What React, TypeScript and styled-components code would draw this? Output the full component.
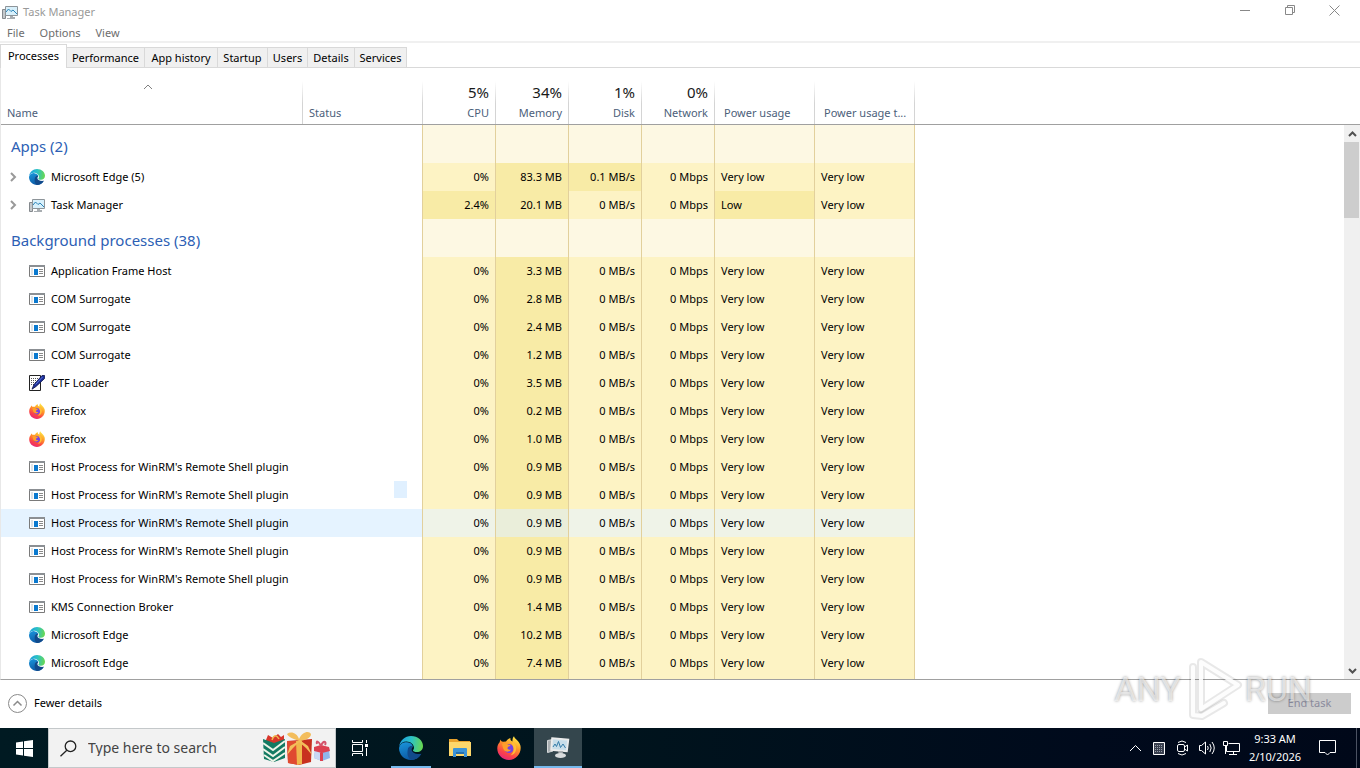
import React from 'react';
import styled, { createGlobalStyle, css } from 'styled-components';

const GlobalStyle = createGlobalStyle`
  *, *::before, *::after { box-sizing: border-box; }
  body {
    margin: 0;
    background: #fff;
    color: #000;
    font: 11px/16px "Noto Sans", "Open Sans", sans-serif;
  }
  button, input { font: inherit; color: inherit; }
  button { padding: 0; border: 0; background: none; }
  svg { display: block; flex: none; }
`;

/* ---------- window shell ---------- */

const Desktop = styled.div`
  display: flex;
  flex-direction: column;
  height: 100vh;
  overflow: hidden;
`;

const Window = styled.main`
  position: relative;
  flex: 1;
  min-height: 0;
  display: flex;
  flex-direction: column;
  background: #fff;
`;

const TitleBar = styled.header`
  display: flex;
  align-items: center;
  height: 24px;
  padding-left: 2px;
  gap: 5px;
  color: #999;
`;

const Title = styled.h1`
  flex: 1;
  margin: 0;
  font-size: 11px;
  font-weight: 400;
`;

const CaptionButton = styled.button`
  display: flex;
  align-items: center;
  justify-content: center;
  width: 45px;
  height: 20px;
  margin-bottom: 4px;
  color: #888;
`;

const CaptionButtons = styled.div`
  display: flex;
  padding-right: 3px;
`;

const MenuBar = styled.nav`
  display: flex;
  height: 19px;
  padding-left: 7px;
  gap: 15px;
  border-bottom: 2px solid #f0f0f0;
  color: #6d6d6d;
`;

const MenuButton = styled.button`
  height: 17px;
  line-height: 17px;
`;

const Tabs = styled.div`
  display: flex;
  align-items: flex-end;
  height: 25px;
  border-bottom: 1px solid #d9d9d9;
`;

const Tab = styled.button<{ $width: number; $active?: boolean }>`
  width: ${p => p.$width}px;
  height: 20px;
  border: 1px solid #d9d9d9;
  border-left-width: 0;
  border-bottom: 0;
  background: #f0f0f0;
  white-space: nowrap;
  ${p =>
    p.$active &&
    css`
      height: 24px;
      margin-bottom: -1px;
      padding-bottom: 2px;
      border-left-width: 1px;
      background: #fff;
    `}
`;

/* ---------- process list ---------- */

const Content = styled.section`
  flex: 1;
  min-height: 0;
  display: flex;
  border-left: 1px solid #e8e8e8;
  border-bottom: 1px solid #a0a0a0;
`;

const TableArea = styled.div`
  flex: 1;
  min-width: 0;
  overflow: hidden;
`;

const Table = styled.table`
  width: 100%;
  table-layout: fixed;
  border-collapse: separate;
  border-spacing: 0;
`;

const HeadCell = styled.th<{ $line?: boolean }>`
  height: 57px;
  padding: 0;
  border-bottom: 1px solid #a0a0a0;
  background: ${p =>
    p.$line ? 'linear-gradient(#fff, #d4d4d4 40%) right 0 top 13px / 1px 100% no-repeat' : 'none'};
  color: #4c607a;
  font-weight: 400;
`;

const HeadInner = styled.div<{ $align?: string; $inset?: number }>`
  display: flex;
  flex-direction: column;
  justify-content: flex-end;
  height: 56px;
  padding: 0 7px 3px ${p => p.$inset ?? 6}px;
  text-align: ${p => p.$align ?? 'left'};
  white-space: nowrap;
`;

const SortMark = styled.span`
  display: flex;
  justify-content: center;
  height: 21px;
  padding-right: 8px;
`;

const Total = styled.span`
  color: #1a1a1a;
  font-size: 15px;
  line-height: 20px;
  margin-bottom: 3px;
`;

const shade = {
  group: '#fdf8e3',
  low: '#fdf3c4',
  high: '#f8eba6',
  hoverLow: '#eff3e8',
  hoverHigh: '#eaeeda',
};

const HeatCell = styled.td<{ $bg: string; $right?: boolean }>`
  padding: 0 6px;
  border-right: 1px solid #e2d09c;
  background: ${p => p.$bg};
  text-align: ${p => (p.$right ? 'right' : 'left')};
  white-space: nowrap;
`;

const StatusCell = styled.td`
  position: relative;
  padding: 0;
  border-right: 1px solid #e2d09c;
`;

const Row = styled.tr<{ $hover?: boolean }>`
  height: 28px;
  & > th, & > ${StatusCell} { background: ${p => (p.$hover ? '#e5f3ff' : 'none')}; }
`;

const NameCell = styled.th`
  padding: 0;
  font-weight: 400;
  text-align: left;
`;

const NameInner = styled.div`
  display: flex;
  align-items: center;
  height: 28px;
  padding-left: 8px;
  white-space: nowrap;
`;

const ExpandSlot = styled.span`
  display: flex;
  flex: none;
  align-items: center;
  width: 20px;
`;

const ProcessName = styled.span`
  margin-left: 6px;
`;

const GroupRow = styled.tr`
  height: 38px;
`;

const GroupName = styled.th`
  padding: 3px 10px 0;
  border-right: 1px solid #e2d09c;
  color: #2d5fb5;
  font-size: 15px;
  font-weight: 400;
  line-height: 20px;
  text-align: left;
`;

const DragBox = styled.span`
  position: absolute;
  top: 0;
  right: 15px;
  width: 13px;
  height: 17px;
  background: #e0f0ff;
`;

const ScrollColumn = styled.div`
  display: flex;
  flex-direction: column;
  width: 16px;
`;

const ScrollHead = styled.div`
  height: 57px;
  border-bottom: 1px solid #a0a0a0;
`;

const ScrollBar = styled.div`
  flex: 1;
  display: flex;
  flex-direction: column;
  justify-content: space-between;
  background: #f0f0f0;
`;

const ScrollButton = styled.button`
  display: flex;
  align-items: center;
  justify-content: center;
  height: 17px;
`;

const ScrollThumb = styled.div`
  height: 76px;
  margin: 0 1px auto 0;
  background: #cdcdcd;
`;

const Footer = styled.footer`
  display: flex;
  align-items: center;
  justify-content: space-between;
  height: 48px;
  padding: 0 9px 2px 8px;
`;

const DetailsButton = styled.button`
  display: flex;
  align-items: center;
  gap: 7px;
`;

const EndTask = styled.button`
  width: 83px;
  height: 21px;
  background: #ccc;
  color: #8a8a9c;
`;

const Watermark = styled.div`
  position: absolute;
  right: 48px;
  bottom: 7px;
  display: flex;
  align-items: center;
  gap: 2px;
  color: rgba(255, 255, 255, 0.6);
  font: 400 34px/64px Roboto, "Liberation Sans", sans-serif;
  text-shadow: 0 0 3px rgba(0, 0, 0, 0.4);
  pointer-events: none;
`;

/* ---------- taskbar ---------- */

const TaskBar = styled.nav`
  display: flex;
  height: 40px;
  background: linear-gradient(90deg, #001a22, #00141d 45%, #000a1c 80%, #000819);
  color: #fff;
`;

const TaskButton = styled.button<{ $state?: 'open' | 'active' }>`
  display: flex;
  align-items: center;
  justify-content: center;
  width: 48px;
  height: 40px;
  margin-right: 1px;
  background:
    linear-gradient(#76b9ed, #76b9ed) center bottom / ${p => (p.$state === 'active' ? '48px' : p.$state ? '40px' : '0')} 2px no-repeat
    ${p => (p.$state === 'active' ? '#34464d' : 'transparent')};
`;

const StartButton = styled(TaskButton)`
  margin-right: 0;
`;

const TaskViewButton = styled(TaskButton)`
  margin-right: 3px;
`;

const Search = styled.label`
  display: flex;
  align-items: center;
  width: 288px;
  padding: 0 4px 0 11px;
  border: 1px solid #c4c8ca;
  background: #f2f2f2;
  color: #222;
`;

const SearchInput = styled.input`
  flex: 1;
  min-width: 0;
  margin-left: 11px;
  padding: 0;
  border: 0;
  outline: 0;
  background: none;
  font-size: 14px;
  &::placeholder { color: #444; opacity: 1; }
`;

const Tray = styled.div`
  display: flex;
  align-items: center;
  margin-left: auto;
`;

const TrayButton = styled.button`
  display: flex;
  align-items: center;
  justify-content: center;
  width: 24px;
  height: 40px;
`;

const Clock = styled.button`
  width: 64px;
  line-height: 18px;
  text-align: center;
  white-space: nowrap;
`;

const NoticeButton = styled(TrayButton)`
  width: 50px;
  margin-right: 3px;
  padding-right: 9px;
  border-right: 1px solid #4b5262;
`;

/* ---------- icons ---------- */

const Chevron = ({ d, w, h, color, stroke = 1 }: { d: string; w: number; h: number; color: string; stroke?: number }) => (
  <svg width={w} height={h} viewBox={`0 0 ${w} ${h}`} fill="none" stroke={color} strokeWidth={stroke}>
    <path d={d} />
  </svg>
);

const EdgeIcon = ({ size = 16 }: { size?: number }) => (
  <svg width={size} height={size} viewBox="0 0 24 24">
    <defs>
      <linearGradient id="edgeTop" x1="0" y1="0.4" x2="1" y2="0.5">
        <stop offset="0" stopColor="#1b9de0" />
        <stop offset="0.5" stopColor="#2dc3c4" />
        <stop offset="1" stopColor="#69d84f" />
      </linearGradient>
      <linearGradient id="edgeLeft" x1="0" y1="0" x2="0.4" y2="1">
        <stop offset="0" stopColor="#1a96dc" />
        <stop offset="1" stopColor="#0c59a4" />
      </linearGradient>
    </defs>
    <path fill="url(#edgeLeft)" d="M0.300 11C1.500 7 5 6 8 6.200C12 6.500 14 9 13.800 11C12.500 9.800 9.500 10.500 9.200 14C9 18 13 20.500 17 20C19 19.700 20.500 18.800 22 18C20 21.700 16.500 24 12 24C5 24 0 18.500 0 12Z" />
    <path fill="#114a8b" d="M8.800 13.500C9.300 10.500 12 9.500 13.800 11C12 12.800 12.400 15.200 14.300 16.500C16.500 18 19.500 18.200 22.400 17.800C20 21.900 16.300 24 12.600 24C8.500 22.500 8 17.500 8.800 13.500Z" />
    <path fill="url(#edgeTop)" d="M0.200 10.500C1 4.500 6 0 12 0C19 0 24 4.800 24 10C24 14 21 16 18 16C15.500 16 14 15.300 14 14.500C14 14 15 13.400 15 11.800C15 8.500 11.500 5.500 7.500 5.500C4 5.500 1.500 7.300 0.200 10.500Z" />
  </svg>
);

const FirefoxIcon = ({ size = 16 }: { size?: number }) => (
  <svg width={size} height={size} viewBox="0 0 24 24">
    <defs>
      <linearGradient id="fox" x1="0.8" y1="0" x2="0.3" y2="1">
        <stop offset="0" stopColor="#fff04a" />
        <stop offset="0.4" stopColor="#ff9a26" />
        <stop offset="0.75" stopColor="#fb4347" />
        <stop offset="1" stopColor="#e3257e" />
      </linearGradient>
    </defs>
    <path fill="url(#fox)" d="M3.500 3.500C4 5 4.700 5.700 6 5.800L9 5.500C10 3.500 11.500 2.500 13.500 2C13 4 14 4.500 15.500 5.500C15.300 3 16 1.200 17 0.300C17.500 3 22 4.500 23.400 9.500C25 17 19.500 24 12 24C5 24 0 18.500 0.300 12C0.400 9.500 1.300 7.500 2.500 6.500Z" />
    <circle cx="12" cy="12.500" r="4.600" fill="#7542e5" />
    <path fill="#ff9f2a" d="M5 8C7 6.500 9.500 7 10.800 8.500L13.500 9C13.300 10.300 11 10.500 10.600 11.800C10 13.500 12 14 14 13.500C13 16 9 16.500 7 14C6 12.500 5.500 10 5 8Z" />
    <path fill="#ffbd37" d="M14.500 5.500C18 7 20 10 19 14C18.500 17 16 19 13.500 19.500C17 16.500 17.500 12.500 15.500 9.500Z" />
  </svg>
);

const WindowIcon = () => (
  <svg width="16" height="16" viewBox="0 0 16 16">
    <path fill="#fff" stroke="#7a7a7a" d="M0.500 2.500H15.500V13.500H0.500Z" />
    <path fill="#8b8f93" d="M0 2H16V4H0Z" />
    <path fill="#dfe3e6" d="M2 5H4V12H2Z" />
    <path fill="#0a79cf" d="M5 6H9V12H5Z" />
    <path stroke="#8a8a8a" d="M10 6.500H14M10 8.500H14M10 10.500H14" />
  </svg>
);

const PenIcon = () => (
  <svg width="16" height="16" viewBox="0 0 16 16">
    <path fill="#fff" stroke="#222" d="M0.500 0.500H11.500V15.500H0.500Z" />
    <path stroke="#555" strokeDasharray="1 1" d="M2 3.500H9M2 5.500H8M2 7.500H7M2 9.500H5" />
    <path fill="#1c2f9c" stroke="#0a1045" strokeWidth="0.800" d="M13 0.500L15.600 0.500V3.500L7 11.500L3 14.200L5 9.500Z" />
    <path stroke="#6c86e8" strokeWidth="0.800" d="M13.500 2L6.500 9.500" />
  </svg>
);

const MonitorIcon = () => (
  <svg width="16" height="16" viewBox="0 0 16 16">
    <path fill="#c4c8cb" stroke="#84898d" d="M0.500 5.500H3.500V14.500H0.500Z" />
    <path fill="#d8f0fb" stroke="#8d9499" d="M3.500 2.500H15.500V11.500H3.500Z" />
    <path fill="none" stroke="#2b84b8" d="M4 8L6.500 5L9 7.500L11 6L15 10" />
    <path fill="#a8adb1" d="M8 12H11V13H13V15H5V14H8Z" />
  </svg>
);

const MonitorLargeIcon = () => (
  <svg width="24" height="24" viewBox="0 0 24 24">
    <path fill="#a9aeb1" stroke="#d6d9da" d="M1.500 4.500L7 3.500V15L1.500 16.500Z" />
    <path fill="#dfe8ec" stroke="#ececec" strokeWidth="1.500" d="M6 2L22.500 3.500L21 15.500L5 14Z" />
    <path fill="#c7dde9" d="M7.200 3.500L21 4.800L20 14L6.500 12.800Z" />
    <path fill="none" stroke="#337ba8" d="M7 11L9 8L10.500 10.500L12.500 5.500L14.500 11.500L17 8L19.500 12" />
    <path fill="#a9adb0" d="M12 15H17L16.500 19H13Z" />
    <ellipse cx="14.500" cy="19.500" rx="5.500" ry="2.500" fill="#d9dcdd" />
  </svg>
);

const FolderIcon = () => (
  <svg width="24" height="24" viewBox="0 0 24 24">
    <path fill="#e9a22c" d="M1 3H9L11 5H22V8H1Z" />
    <path fill="#fdd76b" d="M1 6H23V20H1Z" />
    <path fill="#3c93d6" d="M5 13Q5 12 6 12H18Q19 12 19 13V21H16V17H8V21H5Z" />
    <path fill="#256fae" d="M8 16H16V18H8Z" />
  </svg>
);

const GiftsIcon = () => (
  <svg width="68" height="34" viewBox="0 0 68 34">
    <path fill="#d8362b" d="M3 9L5 4L10 7L15 3L18 6L21 4V12H3Z" />
    <path fill="none" stroke="#f0b64c" strokeWidth="1.500" d="M9 9Q12 1 16 8" />
    <path fill="#137a62" d="M0 8L11 12L22 8V27L11 31L1 28Z" />
    <path fill="none" stroke="#eef5e8" strokeWidth="2" d="M0 12L10 19L22 10M0 18L10 25L22 16M1 24L10 30L22 22" />
    <path fill="#c8301f" d="M24 10L49 8L48 31L36 34L25 32Z" />
    <path fill="#e04a30" d="M24 10H36V34L25 32Z" />
    <path fill="#f0b64c" d="M33 10H39V33L34 34Z" />
    <path fill="#f3bd5c" d="M36 10C31 8 25 6 24 3C28 0 34 2 36 8C39 1 46 -1 48 3C48 7 42 9 38 10L45 15L49 24L43 17L36 11L30 17L24 24L27 15Z" />
    <path fill="#8fb5ea" d="M52 19L66 18L67 27L59 30L51 27Z" />
    <path fill="#c9d8f4" d="M52 19L59 21V30L51 27Z" />
    <path fill="#dc4050" d="M51 16L58 14L66 16L67 20L59 22L51 20ZM57 20H60V30H57Z" />
    <path fill="none" stroke="#d4536a" strokeWidth="2" d="M58 15C55 9 53 10 54 13M58 15C60 9 64 10 62 14" />
  </svg>
);

const PlayMark = () => (
  <svg width="60" height="64" viewBox="0 0 60 64" fill="none" strokeLinejoin="round" strokeLinecap="round">
    <g stroke="#000" strokeOpacity="0.090" strokeWidth="8">
      <path d="M18 5L55 28L18 52Z" />
      <path d="M10 10V58L19 59L41 46" />
    </g>
    <g stroke="#fff" strokeOpacity="0.900" strokeWidth="4">
      <path d="M18 5L55 28L18 52Z" />
      <path d="M10 10V58L19 59L41 46" />
    </g>
  </svg>
);

/* ---------- data ---------- */

type IconName = 'edge' | 'monitor' | 'window' | 'pen' | 'firefox';

const icons: Record<IconName, React.ReactNode> = {
  edge: <EdgeIcon />,
  monitor: <MonitorIcon />,
  window: <WindowIcon />,
  pen: <PenIcon />,
  firefox: <FirefoxIcon />,
};

interface Process {
  name: string;
  icon: IconName;
  memory: string;
  cpu?: string;
  disk?: string;
  power?: string;
  expandable?: boolean;
  hover?: boolean;
  dragBox?: boolean;
}

const winrm = "Host Process for WinRM's Remote Shell plugin";

const groups: { title: string; rows: Process[] }[] = [
  {
    title: 'Apps (2)',
    rows: [
      { name: 'Microsoft Edge (5)', icon: 'edge', memory: '83.3 MB', disk: '0.1 MB/s', expandable: true },
      { name: 'Task Manager', icon: 'monitor', memory: '20.1 MB', cpu: '2.4%', power: 'Low', expandable: true },
    ],
  },
  {
    title: 'Background processes (38)',
    rows: [
      { name: 'Application Frame Host', icon: 'window', memory: '3.3 MB' },
      { name: 'COM Surrogate', icon: 'window', memory: '2.8 MB' },
      { name: 'COM Surrogate', icon: 'window', memory: '2.4 MB' },
      { name: 'COM Surrogate', icon: 'window', memory: '1.2 MB' },
      { name: 'CTF Loader', icon: 'pen', memory: '3.5 MB' },
      { name: 'Firefox', icon: 'firefox', memory: '0.2 MB' },
      { name: 'Firefox', icon: 'firefox', memory: '1.0 MB' },
      { name: winrm, icon: 'window', memory: '0.9 MB' },
      { name: winrm, icon: 'window', memory: '0.9 MB', dragBox: true },
      { name: winrm, icon: 'window', memory: '0.9 MB', hover: true },
      { name: winrm, icon: 'window', memory: '0.9 MB' },
      { name: winrm, icon: 'window', memory: '0.9 MB' },
      { name: 'KMS Connection Broker', icon: 'window', memory: '1.4 MB' },
      { name: 'Microsoft Edge', icon: 'edge', memory: '10.2 MB' },
      { name: 'Microsoft Edge', icon: 'edge', memory: '7.4 MB' },
    ],
  },
];

const tabs: [string, number][] = [
  ['Processes', 67],
  ['Performance', 78],
  ['App history', 73],
  ['Startup', 50],
  ['Users', 40],
  ['Details', 47],
  ['Services', 52],
];

const totals: [string, string][] = [
  ['5%', 'CPU'],
  ['34%', 'Memory'],
  ['1%', 'Disk'],
  ['0%', 'Network'],
];

const columnWidths = [302, 120, 73, 73, 73, 73, 100, 100];

const ProcessRow = ({ p }: { p: Process }) => {
  const low = p.hover ? shade.hoverLow : shade.low;
  const high = p.hover ? shade.hoverHigh : shade.high;
  return (
    <Row $hover={p.hover}>
      <NameCell scope="row">
        <NameInner>
          <ExpandSlot>
            {p.expandable && (
              <button aria-label={`Expand ${p.name}`}>
                <Chevron d="M2 1L6 5L2 9" w={8} h={10} color="#999" stroke={2} />
              </button>
            )}
          </ExpandSlot>
          {icons[p.icon]}
          <ProcessName>{p.name}</ProcessName>
        </NameInner>
      </NameCell>
      <StatusCell>{p.dragBox && <DragBox />}</StatusCell>
      <HeatCell $right $bg={p.cpu ? high : low}>{p.cpu ?? '0%'}</HeatCell>
      <HeatCell $right $bg={high}>{p.memory}</HeatCell>
      <HeatCell $right $bg={p.disk ? high : low}>{p.disk ?? '0 MB/s'}</HeatCell>
      <HeatCell $right $bg={low}>0 Mbps</HeatCell>
      <HeatCell $bg={p.power ? high : low}>{p.power ?? 'Very low'}</HeatCell>
      <HeatCell $bg={low}>Very low</HeatCell>
      <td />
    </Row>
  );
};

export default function App() {
  return (
    <Desktop>
      <GlobalStyle />
      <Window>
        <TitleBar>
          <MonitorIcon />
          <Title>Task Manager</Title>
          <CaptionButtons>
            <CaptionButton aria-label="Minimize">
              <Chevron d="M0 5.500H10" w={10} h={10} color="currentColor" />
            </CaptionButton>
            <CaptionButton aria-label="Restore">
              <Chevron d="M0.500 2.500H7.500V9.500H0.500ZM2.500 2.500V0.500H9.500V7.500H7.500" w={10} h={10} color="currentColor" />
            </CaptionButton>
            <CaptionButton aria-label="Close">
              <Chevron d="M0.500 0.500L10.500 10.500M10.500 0.500L0.500 10.500" w={11} h={11} color="currentColor" />
            </CaptionButton>
          </CaptionButtons>
        </TitleBar>
        <MenuBar>
          <MenuButton>File</MenuButton>
          <MenuButton>Options</MenuButton>
          <MenuButton>View</MenuButton>
        </MenuBar>
        <Tabs role="tablist">
          {tabs.map(([label, width], i) => (
            <Tab key={label} role="tab" aria-selected={i === 0} $width={width} $active={i === 0}>
              {label}
            </Tab>
          ))}
        </Tabs>

        <Content>
          <TableArea>
            <Table>
              <colgroup>
                {columnWidths.map((w, i) => (
                  <col key={i} width={w} />
                ))}
                <col />
              </colgroup>
              <thead>
                <tr>
                  <HeadCell $line scope="col" aria-sort="ascending">
                    <HeadInner>
                      <SortMark>
                        <Chevron d="M1 5L5 1L9 5" w={10} h={6} color="#808080" />
                      </SortMark>
                      Name
                    </HeadInner>
                  </HeadCell>
                  <HeadCell $line scope="col">
                    <HeadInner>Status</HeadInner>
                  </HeadCell>
                  {totals.map(([value, label]) => (
                    <HeadCell $line scope="col" key={label}>
                      <HeadInner $align="right">
                        <Total>{value}</Total>
                        {label}
                      </HeadInner>
                    </HeadCell>
                  ))}
                  <HeadCell $line scope="col">
                    <HeadInner $inset={9}>Power usage</HeadInner>
                  </HeadCell>
                  <HeadCell $line scope="col">
                    <HeadInner $inset={9}>Power usage t...</HeadInner>
                  </HeadCell>
                  <HeadCell as="td" />
                </tr>
              </thead>
              {groups.map(g => (
                <tbody key={g.title}>
                  <GroupRow>
                    <GroupName colSpan={2} scope="rowgroup">{g.title}</GroupName>
                    {columnWidths.slice(2).map((_, i) => (
                      <HeatCell key={i} $bg={shade.group} />
                    ))}
                    <td />
                  </GroupRow>
                  {g.rows.map((p, i) => (
                    <ProcessRow key={i} p={p} />
                  ))}
                </tbody>
              ))}
              <tbody>
                <Row>
                  <NameCell as="td" />
                  <StatusCell />
                  {columnWidths.slice(2).map((_, i) => (
                    <HeatCell key={i} $bg={i === 1 ? shade.high : shade.low} />
                  ))}
                  <td />
                </Row>
              </tbody>
            </Table>
          </TableArea>
          <ScrollColumn>
            <ScrollHead />
            <ScrollBar>
              <ScrollButton aria-label="Scroll up">
                <Chevron d="M1 5L4.500 1.500L8 5" w={9} h={6} color="#505050" stroke={2} />
              </ScrollButton>
              <ScrollThumb />
              <ScrollButton aria-label="Scroll down">
                <Chevron d="M1 1L4.500 4.500L8 1" w={9} h={6} color="#505050" stroke={2} />
              </ScrollButton>
            </ScrollBar>
          </ScrollColumn>
        </Content>

        <Footer>
          <DetailsButton>
            <svg width="19" height="19" viewBox="0 0 19 19" fill="none" stroke="#8a8a8a">
              <circle cx="9.500" cy="9.500" r="9" />
              <path d="M5.500 11.500L9.500 7.500L13.500 11.500" strokeWidth="1.500" />
            </svg>
            Fewer details
          </DetailsButton>
          <EndTask disabled>End task</EndTask>
        </Footer>
        <Watermark aria-hidden="true">
          <span>ANY</span>
          <PlayMark />
          <span>RUN</span>
        </Watermark>
      </Window>

      <TaskBar>
        <StartButton aria-label="Start">
          <svg width="17" height="17" viewBox="0 0 17 17" fill="#fff">
            <path d="M0 2.400L7 1.400V8H0ZM8 1.300L17 0V8H8ZM0 9H7V15.600L0 14.600ZM8 9H17V17L8 15.700Z" />
          </svg>
        </StartButton>
        <Search>
          <svg width="17" height="17" viewBox="0 0 17 17" fill="none" stroke="#222" strokeWidth="1.300">
            <circle cx="10.500" cy="6.300" r="5.300" />
            <path d="M6.800 10.300L0.500 16.300" />
          </svg>
          <SearchInput aria-label="Search" placeholder="Type here to search" />
          <GiftsIcon />
        </Search>
        <TaskViewButton aria-label="Task view">
          <svg width="18" height="16" viewBox="0 0 18 16" fill="none" stroke="#fff">
            <path d="M1.500 0V2.500H11.500V0M1.500 4.500H11.500V11.500H1.500ZM1.500 16V13.500H11.500V16M15.500 0V3M15.500 8V16" />
            <path fill="#fff" stroke="none" d="M14 4H17V7H14Z" />
          </svg>
        </TaskViewButton>
        <TaskButton $state="open" aria-label="Microsoft Edge">
          <EdgeIcon size={24} />
        </TaskButton>
        <TaskButton aria-label="File Explorer">
          <FolderIcon />
        </TaskButton>
        <TaskButton aria-label="Firefox">
          <FirefoxIcon size={24} />
        </TaskButton>
        <TaskButton $state="active" aria-label="Task Manager">
          <MonitorLargeIcon />
        </TaskButton>
        <Tray>
          <TrayButton aria-label="Show hidden icons">
            <Chevron d="M1 7L6.500 1.500L12 7" w={13} h={8} color="#fff" />
          </TrayButton>
          <TrayButton aria-label="Input indicator">
            <svg width="12" height="13" viewBox="0 0 12 13" fill="#3a4150" stroke="#fff">
              <path d="M0.500 0.500H11.500V12.500H0.500Z" />
              <path stroke="#9aa0aa" strokeDasharray="1 1" d="M2 3.500H10M2 5.500H10M2 7.500H10M2 9.500H10" />
            </svg>
          </TrayButton>
          <TrayButton aria-label="Meet now">
            <svg width="14" height="16" viewBox="0 0 14 16" fill="none" stroke="#fff">
              <path d="M2 2.500Q6 -0.500 10 2.500M2 13.500Q6 16.500 10 13.500" />
              <rect x="1.500" y="4.500" width="7" height="7" rx="1.500" />
              <path d="M8.500 7L11.500 5V11L8.500 9" />
            </svg>
          </TrayButton>
          <TrayButton aria-label="Volume">
            <svg width="17" height="14" viewBox="0 0 17 14" fill="none" stroke="#fff">
              <path d="M0.500 4.500H2.500L6.500 1V13L2.500 9.500H0.500ZM8.500 5Q10 7 8.500 9M10.800 3Q13.500 7 10.800 11M13 1Q17.500 7 13 13" />
            </svg>
          </TrayButton>
          <TrayButton aria-label="Network">
            <svg width="17" height="15" viewBox="0 0 17 15" fill="none" stroke="#fff">
              <path d="M5.500 2.500H16.500V10.500H3.500V5M10.500 10.500V13.500M6 13.500H14M0.500 0.500H4.500V4.500H0.500ZM2.500 4.500V13" />
            </svg>
          </TrayButton>
          <Clock>
            9:33 AM
            <br />
            2/10/2026
          </Clock>
          <NoticeButton aria-label="Notifications">
            <svg width="17" height="16" viewBox="0 0 17 16" fill="none" stroke="#fff">
              <path d="M0.500 0.500H16.500V12.500H11L8.500 15L6 12.500H0.500Z" />
            </svg>
          </NoticeButton>
        </Tray>
      </TaskBar>
    </Desktop>
  );
}
